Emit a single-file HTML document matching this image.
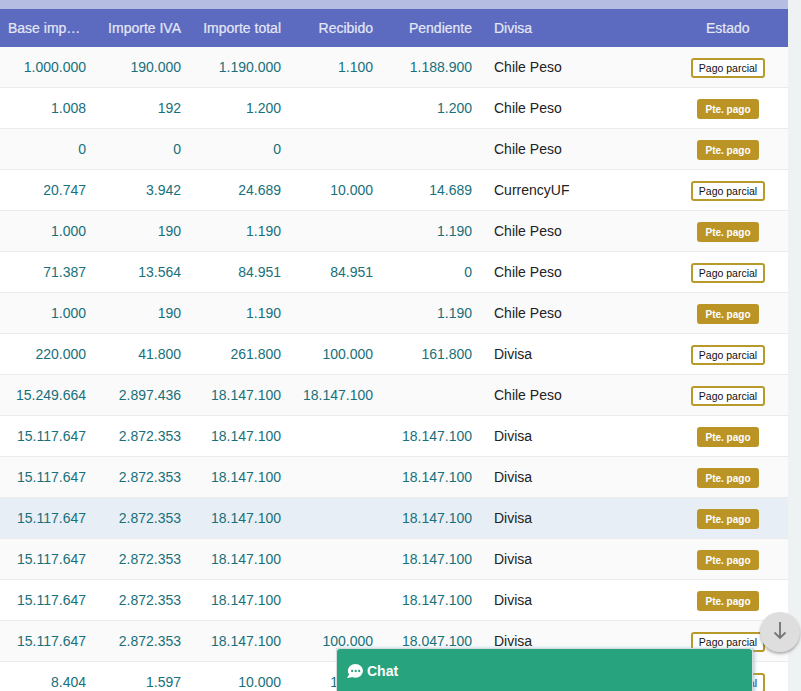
<!DOCTYPE html>
<html><head><meta charset="utf-8"><style>
*{box-sizing:border-box;margin:0;padding:0}
html,body{width:801px;height:691px;overflow:hidden;background:#eff2f3;font-family:"Liberation Sans",sans-serif}
#wrap{position:absolute;left:0;top:0;width:788px;height:691px;background:#fff;overflow:hidden}
#topstrip{position:absolute;left:0;top:0;width:788px;height:9px;background:#b5bde3}
#head{position:absolute;left:0;top:9px;width:788px;height:38px;background:#5c6bc0;color:#e4e7f5;font-size:14px;-webkit-text-stroke:0.2px #e4e7f5}
.h{position:absolute;top:0;height:38px;line-height:38px;white-space:nowrap}
.row{position:absolute;left:0;width:788px;height:41px;border-bottom:1px solid #ebebeb;font-size:14px}
.odd{background:#fafafa}
.even{background:#fff}
.hl{background:#e8eef5}
.n{position:absolute;top:0;height:40px;line-height:40px;color:#17707a;text-align:right;white-space:nowrap}
.d{position:absolute;left:494px;top:0;height:40px;line-height:40px;color:#222;white-space:nowrap}
.b{position:absolute;top:11px;height:20px;font-size:10.5px;line-height:16px;border-radius:3px;text-align:center;white-space:nowrap}
.bp{left:691px;width:74px;border:2px solid #b89a2a;background:#fff;color:#111}
.bt{left:697px;width:62px;border:2px solid #bb9426;background:#bb9426;color:#fff;font-weight:bold;font-size:10px;padding-top:1px}
#cw{position:absolute;left:336px;top:648px;width:417px;height:60px;border:1px solid #dadada;border-bottom:0;box-shadow:2px 0 3px rgba(120,190,215,.55)}
#chat{position:absolute;left:0;top:0;width:415px;height:60px;background:#27a37d;border-radius:3px 3px 0 0}
#chat span{position:absolute;left:30px;top:14px;color:#fff;font-weight:bold;font-size:14px}
#fab{position:absolute;left:760px;top:612px;width:40px;height:40px;border-radius:50%;background:#dedede;box-shadow:0 2px 3px rgba(0,0,0,.3)}
</style></head><body>
<div id="wrap">
<div id="topstrip"></div>
<div id="head">
<div class="h" style="left:8px;width:78px;overflow:hidden;text-overflow:ellipsis">Base imponible</div>
<div class="h" style="right:607px">Importe IVA</div>
<div class="h" style="right:507px">Importe total</div>
<div class="h" style="right:415px">Recibido</div>
<div class="h" style="right:316px">Pendiente</div>
<div class="h" style="left:494px">Divisa</div>
<div class="h" style="left:706px">Estado</div>
</div>

<div class="row odd" style="top:47px">
<div class="n" style="right:702px">1.000.000</div>
<div class="n" style="right:607px">190.000</div>
<div class="n" style="right:507px">1.190.000</div>
<div class="n" style="right:415px">1.100</div>
<div class="n" style="right:316px">1.188.900</div>
<div class="d">Chile Peso</div>
<div class="b bp">Pago parcial</div>
</div>
<div class="row even" style="top:88px">
<div class="n" style="right:702px">1.008</div>
<div class="n" style="right:607px">192</div>
<div class="n" style="right:507px">1.200</div>
<div class="n" style="right:316px">1.200</div>
<div class="d">Chile Peso</div>
<div class="b bt">Pte. pago</div>
</div>
<div class="row odd" style="top:129px">
<div class="n" style="right:702px">0</div>
<div class="n" style="right:607px">0</div>
<div class="n" style="right:507px">0</div>
<div class="d">Chile Peso</div>
<div class="b bt">Pte. pago</div>
</div>
<div class="row even" style="top:170px">
<div class="n" style="right:702px">20.747</div>
<div class="n" style="right:607px">3.942</div>
<div class="n" style="right:507px">24.689</div>
<div class="n" style="right:415px">10.000</div>
<div class="n" style="right:316px">14.689</div>
<div class="d">CurrencyUF</div>
<div class="b bp">Pago parcial</div>
</div>
<div class="row odd" style="top:211px">
<div class="n" style="right:702px">1.000</div>
<div class="n" style="right:607px">190</div>
<div class="n" style="right:507px">1.190</div>
<div class="n" style="right:316px">1.190</div>
<div class="d">Chile Peso</div>
<div class="b bt">Pte. pago</div>
</div>
<div class="row even" style="top:252px">
<div class="n" style="right:702px">71.387</div>
<div class="n" style="right:607px">13.564</div>
<div class="n" style="right:507px">84.951</div>
<div class="n" style="right:415px">84.951</div>
<div class="n" style="right:316px">0</div>
<div class="d">Chile Peso</div>
<div class="b bp">Pago parcial</div>
</div>
<div class="row odd" style="top:293px">
<div class="n" style="right:702px">1.000</div>
<div class="n" style="right:607px">190</div>
<div class="n" style="right:507px">1.190</div>
<div class="n" style="right:316px">1.190</div>
<div class="d">Chile Peso</div>
<div class="b bt">Pte. pago</div>
</div>
<div class="row even" style="top:334px">
<div class="n" style="right:702px">220.000</div>
<div class="n" style="right:607px">41.800</div>
<div class="n" style="right:507px">261.800</div>
<div class="n" style="right:415px">100.000</div>
<div class="n" style="right:316px">161.800</div>
<div class="d">Divisa</div>
<div class="b bp">Pago parcial</div>
</div>
<div class="row odd" style="top:375px">
<div class="n" style="right:702px">15.249.664</div>
<div class="n" style="right:607px">2.897.436</div>
<div class="n" style="right:507px">18.147.100</div>
<div class="n" style="right:415px">18.147.100</div>
<div class="d">Chile Peso</div>
<div class="b bp">Pago parcial</div>
</div>
<div class="row even" style="top:416px">
<div class="n" style="right:702px">15.117.647</div>
<div class="n" style="right:607px">2.872.353</div>
<div class="n" style="right:507px">18.147.100</div>
<div class="n" style="right:316px">18.147.100</div>
<div class="d">Divisa</div>
<div class="b bt">Pte. pago</div>
</div>
<div class="row odd" style="top:457px">
<div class="n" style="right:702px">15.117.647</div>
<div class="n" style="right:607px">2.872.353</div>
<div class="n" style="right:507px">18.147.100</div>
<div class="n" style="right:316px">18.147.100</div>
<div class="d">Divisa</div>
<div class="b bt">Pte. pago</div>
</div>
<div class="row hl" style="top:498px">
<div class="n" style="right:702px">15.117.647</div>
<div class="n" style="right:607px">2.872.353</div>
<div class="n" style="right:507px">18.147.100</div>
<div class="n" style="right:316px">18.147.100</div>
<div class="d">Divisa</div>
<div class="b bt">Pte. pago</div>
</div>
<div class="row odd" style="top:539px">
<div class="n" style="right:702px">15.117.647</div>
<div class="n" style="right:607px">2.872.353</div>
<div class="n" style="right:507px">18.147.100</div>
<div class="n" style="right:316px">18.147.100</div>
<div class="d">Divisa</div>
<div class="b bt">Pte. pago</div>
</div>
<div class="row even" style="top:580px">
<div class="n" style="right:702px">15.117.647</div>
<div class="n" style="right:607px">2.872.353</div>
<div class="n" style="right:507px">18.147.100</div>
<div class="n" style="right:316px">18.147.100</div>
<div class="d">Divisa</div>
<div class="b bt">Pte. pago</div>
</div>
<div class="row odd" style="top:621px">
<div class="n" style="right:702px">15.117.647</div>
<div class="n" style="right:607px">2.872.353</div>
<div class="n" style="right:507px">18.147.100</div>
<div class="n" style="right:415px">100.000</div>
<div class="n" style="right:316px">18.047.100</div>
<div class="d">Divisa</div>
<div class="b bp">Pago parcial</div>
</div>
<div class="row even" style="top:662px">
<div class="n" style="right:702px">8.404</div>
<div class="n" style="right:607px">1.597</div>
<div class="n" style="right:507px">10.000</div>
<div class="n" style="right:415px">10.000</div>
<div class="n" style="right:316px">0</div>
<div class="d">Chile Peso</div>
<div class="b bp">Pago parcial</div>
</div>
</div>
<div id="cw"><div id="chat"><svg style="position:absolute;left:10px;top:14px" width="17" height="16" viewBox="0 0 17 16"><ellipse cx="8.4" cy="7.8" rx="7.6" ry="6.9" fill="#fff"/><path d="M2.6 10.6L0.3 14.6Q0.2 15 0.7 14.9L6.5 13.8Z" fill="#fff"/><circle cx="5.1" cy="8" r="1.15" fill="#27a37d"/><circle cx="8.7" cy="8" r="1.15" fill="#27a37d"/><circle cx="12.2" cy="8" r="1.15" fill="#27a37d"/></svg><span>Chat</span></div></div>
<div id="fab"><svg style="position:absolute;left:12px;top:9px" width="16" height="20" viewBox="0 0 16 20"><path d="M8 1v16.5M2.5 11.5l5.5 5.5 5.5-5.5" stroke="#777" stroke-width="1.9" fill="none"/></svg></div>
</body></html>
